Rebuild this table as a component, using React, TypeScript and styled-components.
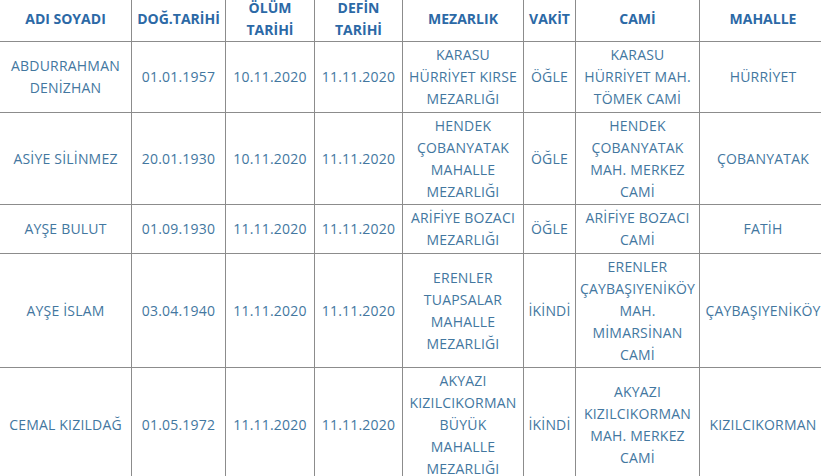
import React from "react";
import styled, { createGlobalStyle } from "styled-components";

const Global = createGlobalStyle`
  html, body { margin: 0; padding: 0; background: #fff; }
  body { overflow: hidden; font-family: "Open Sans", "Liberation Sans", sans-serif; }
`;

const Frame = styled.div`
  width: 821px;
  height: 476px;
  overflow: hidden;
  background: #ffffff;
`;

const Table = styled.table`
  border-collapse: collapse;
  table-layout: fixed;
  width: 827px;
  margin-top: -3px;
  margin-left: -1px;
  font-family: "Open Sans", "Liberation Sans", sans-serif;
`;

const HeadCell = styled.th`
  border: 1px solid #8c8c8c;
  border-top: none;
  padding: 0 2px;
  height: 42px;
  font-size: 14px;
  line-height: 22px;
  font-weight: 700;
  color: #2c69a6;
  text-align: center;
  vertical-align: middle;
  white-space: nowrap;
`;

const Cell = styled.td`
  border: 1px solid #8c8c8c;
  padding: 2px 2px 1.5px;
  font-size: 14px;
  line-height: 22px;
  font-weight: 400;
  letter-spacing: 0.2px;
  color: #43779f;
  text-align: center;
  vertical-align: middle;
  white-space: nowrap;
  overflow: visible;
`;

const widths = [132, 94, 89, 88, 121, 52, 124, 127];

const headers: string[][] = [
  ["ADI SOYADI"],
  ["DOĞ.TARİHİ"],
  ["ÖLÜM", "TARİHİ"],
  ["DEFİN", "TARİHİ"],
  ["MEZARLIK"],
  ["VAKİT"],
  ["CAMİ"],
  ["MAHALLE"],
];

const rows: string[][][] = [
  [
    ["ABDURRAHMAN", "DENİZHAN"],
    ["01.01.1957"],
    ["10.11.2020"],
    ["11.11.2020"],
    ["KARASU", "HÜRRİYET KIRSE", "MEZARLIĞI"],
    ["ÖĞLE"],
    ["KARASU", "HÜRRİYET MAH.", "TÖMEK CAMİ"],
    ["HÜRRİYET"],
  ],
  [
    ["ASİYE SİLİNMEZ"],
    ["20.01.1930"],
    ["10.11.2020"],
    ["11.11.2020"],
    ["HENDEK", "ÇOBANYATAK", "MAHALLE", "MEZARLIĞI"],
    ["ÖĞLE"],
    ["HENDEK", "ÇOBANYATAK", "MAH. MERKEZ", "CAMİ"],
    ["ÇOBANYATAK"],
  ],
  [
    ["AYŞE BULUT"],
    ["01.09.1930"],
    ["11.11.2020"],
    ["11.11.2020"],
    ["ARİFİYE BOZACI", "MEZARLIĞI"],
    ["ÖĞLE"],
    ["ARİFİYE BOZACI", "CAMİ"],
    ["FATİH"],
  ],
  [
    ["AYŞE İSLAM"],
    ["03.04.1940"],
    ["11.11.2020"],
    ["11.11.2020"],
    ["ERENLER", "TUAPSALAR", "MAHALLE", "MEZARLIĞI"],
    ["İKİNDİ"],
    ["ERENLER", "ÇAYBAŞIYENİKÖY", "MAH.", "MİMARSİNAN", "CAMİ"],
    ["ÇAYBAŞIYENİKÖY"],
  ],
  [
    ["CEMAL KIZILDAĞ"],
    ["01.05.1972"],
    ["11.11.2020"],
    ["11.11.2020"],
    ["AKYAZI", "KIZILCIKORMAN", "BÜYÜK", "MAHALLE", "MEZARLIĞI"],
    ["İKİNDİ"],
    ["AKYAZI", "KIZILCIKORMAN", "MAH. MERKEZ", "CAMİ"],
    ["KIZILCIKORMAN"],
  ],
];

const Lines: React.FC<{ lines: string[] }> = ({ lines }) => (
  <>
    {lines.map((l, i) => (
      <React.Fragment key={i}>
        {i > 0 && <br />}
        {l}
      </React.Fragment>
    ))}
  </>
);

export default function App() {
  return (
    <Frame>
      <Global />
      <Table>
        <colgroup>
          {widths.map((w, i) => (
            <col key={i} style={{ width: w }} />
          ))}
        </colgroup>
        <thead>
          <tr>
            {headers.map((h, i) => (
              <HeadCell key={i}>
                <Lines lines={h} />
              </HeadCell>
            ))}
          </tr>
        </thead>
        <tbody>
          {rows.map((r, ri) => (
            <tr key={ri}>
              {r.map((c, ci) => (
                <Cell key={ci}>
                  <Lines lines={c} />
                </Cell>
              ))}
            </tr>
          ))}
        </tbody>
      </Table>
    </Frame>
  );
}
